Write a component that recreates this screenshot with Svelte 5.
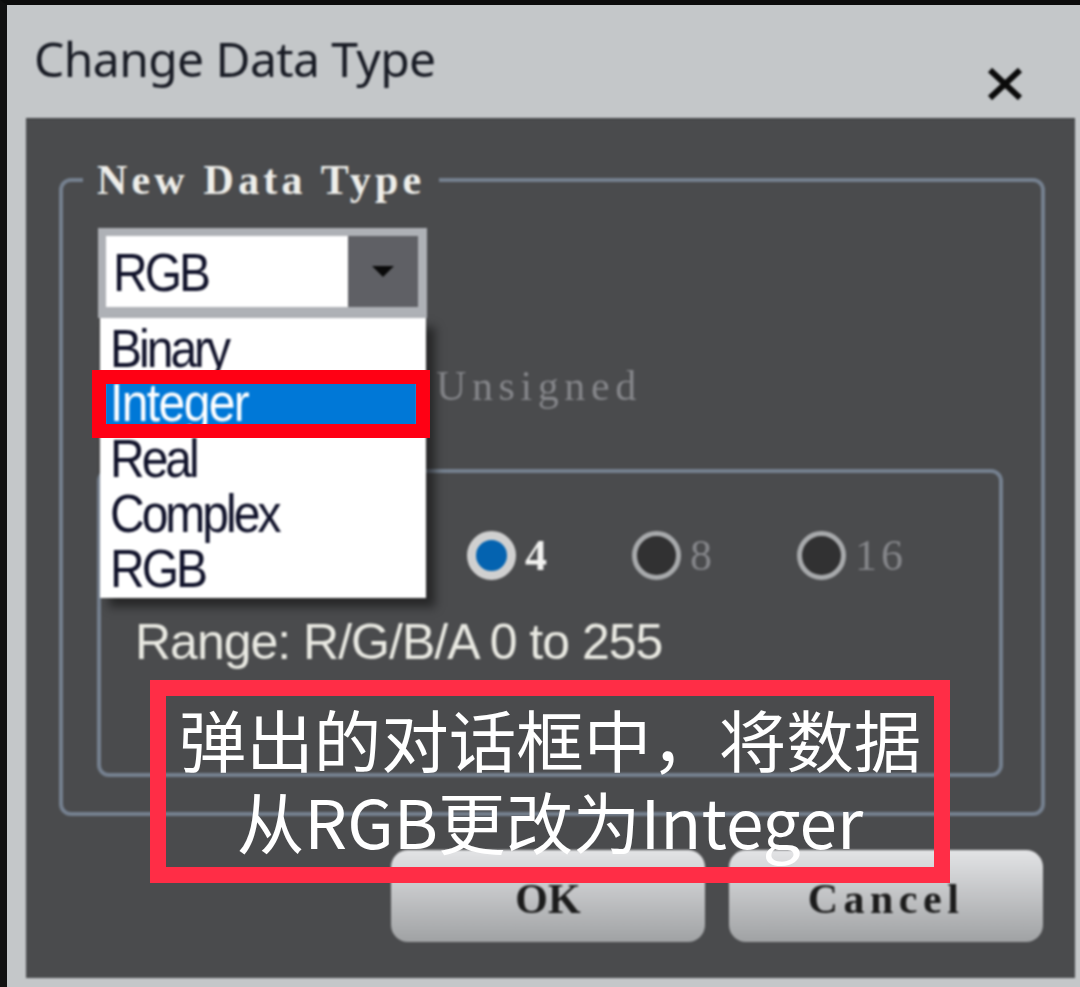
<script>
  const items = ['Binary', 'Integer', 'Real', 'Complex', 'RGB'];
  const radios = [
    { label: '4', on: true },
    { label: '8', on: false },
    { label: '16', on: false }
  ];
</script>

<div class="shot">
  <div class="dialog">
    <div class="titlebar">
      <span class="title">Change Data Type</span>
      <svg class="close" width="36" height="32" viewBox="0 0 36 32">
        <path d="M3 2 L33 30 M33 2 L3 30" stroke="#0a0a0a" stroke-width="6" fill="none" />
      </svg>
    </div>

    <div class="panel">
      <div class="frame outer">
        <span class="legend">New Data Type</span>

        <div class="combo">
          <span class="combo-value">RGB</span>
          <span class="combo-btn"><i class="arrow"></i></span>
        </div>

        <div class="unsigned">Unsigned</div>

        <div class="frame inner">
          <div class="radios">
            {#each radios as r}
              <div class="radio" class:on={r.on}>
                <span class="dot"></span>
                <span class="radio-label">{r.label}</span>
              </div>
            {/each}
          </div>
          <div class="range">Range: R/G/B/A 0 to 255</div>
        </div>

        <ul class="list">
          {#each items as item}
            <li class:sel={item === 'Integer'}><span>{item}</span></li>
          {/each}
        </ul>
      </div>

      <div class="buttons">
        <button class="ok">OK</button>
        <button class="cancel">Cancel</button>
      </div>
    </div>
  </div>

  <div class="mark-integer"></div>

  <div class="note">
    <div>弹出的对话框中，将数据</div>
    <div>从RGB更改为Integer</div>
  </div>
</div>

<style>
  :global(body) {
    margin: 0;
    background: #c3c6c8;
  }

  .shot {
    position: relative;
    box-sizing: border-box;
    width: 1080px;
    height: 987px;
    overflow: hidden;
    background: #c4c7c9;
    border-top: 5px solid #0c0c0c;
    border-left: 7px solid #111;
  }

  .dialog {
    height: 982px;
    filter: blur(0.9px);
  }

  .titlebar {
    box-sizing: border-box;
    display: flex;
    justify-content: space-between;
    height: 113px;
    padding: 24px 57px 0 27px;
  }

  .title {
    font-family: "Noto Sans", "Liberation Sans", sans-serif;
    font-size: 48px;
    line-height: 60px;
    letter-spacing: -0.6px;
    color: #181b24;
  }

  .close {
    margin-top: 39px;
  }

  .panel {
    box-sizing: border-box;
    width: 1049px;
    height: 860px;
    margin-left: 19px;
    padding: 58px 0 0 33px;
    background: #4a4b4d;
    border-top: 2px solid #454648;
  }

  .frame {
    box-sizing: border-box;
    border: 4px solid #75808f;
    border-radius: 12px;
  }

  .outer {
    position: relative;
    width: 986px;
    height: 638px;
    padding: 46px 0 0 35px;
  }

  .legend {
    position: absolute;
    left: 20px;
    top: -25px;
    padding: 0 14px;
    background: #4a4b4d;
    font-family: "Liberation Serif", serif;
    font-size: 42px;
    font-weight: 700;
    line-height: 46px;
    letter-spacing: 4.2px;
    color: #eeeeea;
  }

  .combo {
    box-sizing: border-box;
    display: flex;
    justify-content: space-between;
    width: 329px;
    height: 90px;
    padding: 0 9px 0 0;
    background: #fff;
    border: 8px solid #aeb1b6;
    border-right-width: 0;
    border-bottom-width: 11px;
    box-shadow: inset -9px 0 0 #aeb1b6;
  }

  .combo-value {
    display: inline-block;
    height: 71px;
    padding-left: 7px;
    font-family: "Liberation Sans", sans-serif;
    font-size: 48px;
    line-height: 74px;
    letter-spacing: -3px;
    color: #10122a;
    transform: scaleY(1.12);
  }

  .combo-btn {
    display: flex;
    align-items: center;
    justify-content: center;
    width: 70px;
    background: #5f6065;
  }

  .arrow {
    width: 0;
    height: 0;
    border-left: 11px solid transparent;
    border-right: 11px solid transparent;
    border-top: 11px solid #0a0a0a;
  }

  .unsigned {
    margin: 42px 0 0 338px;
    font-family: "Liberation Serif", serif;
    font-size: 42px;
    line-height: 52px;
    letter-spacing: 5.6px;
    color: #85868a;
  }

  .inner {
    width: 906px;
    height: 308px;
    margin: 57px 0 0 -1px;
    padding: 55px 0 0 0;
  }

  .radios {
    display: flex;
    margin-left: 366px;
  }

  .radio {
    display: flex;
    align-items: center;
    gap: 9px;
    width: 165px;
    height: 54px;
  }

  .dot {
    box-sizing: border-box;
    flex: none;
    width: 49px;
    height: 49px;
    border: 5px solid #a8aaac;
    border-radius: 50%;
    background: #313132;
  }

  .radio.on .dot {
    border: 9px solid #d0d0d0;
    background: #0463b0;
  }

  .radio-label {
    font-family: "Liberation Serif", serif;
    font-size: 44px;
    letter-spacing: 4px;
    color: #85868a;
  }

  .radio.on .radio-label {
    font-weight: 700;
    color: #f2f2f0;
  }

  .range {
    margin: 33px 0 0 34px;
    font-family: "Liberation Sans", sans-serif;
    font-size: 50px;
    line-height: 54px;
    letter-spacing: -1px;
    color: #e9e9e2;
  }

  .list {
    position: absolute;
    left: 37px;
    top: 136px;
    box-sizing: border-box;
    width: 326px;
    height: 280px;
    margin: 0;
    padding: 4px 0 0 0;
    list-style: none;
    background: #fff;
    box-shadow: 9px 9px 9px rgba(15, 15, 15, 0.6);
    font-family: "Liberation Sans", sans-serif;
    font-size: 48px;
    letter-spacing: -3px;
    color: #10122a;
  }

  .list li {
    height: 55px;
    padding-left: 10px;
    line-height: 54px;
  }

  .list li span {
    display: inline-block;
    transform: scaleY(1.12);
  }

  .list li.sel {
    height: 44px;
    margin: 5px 9px 6px 5px;
    padding-left: 5px;
    line-height: 42px;
    letter-spacing: -1.6px;
    overflow: hidden;
    background: #0078d7;
    color: #fff;
  }

  .buttons {
    display: flex;
    justify-content: flex-end;
    gap: 24px;
    width: 984px;
    margin-top: 34px;
  }

  .buttons button {
    box-sizing: border-box;
    width: 314px;
    height: 92px;
    padding: 6px 0 0 0;
    border: 0;
    border-radius: 17px;
    background: linear-gradient(#e3e4e6, #a0a2a4);
    font-family: "Liberation Serif", serif;
    font-size: 42px;
    font-weight: 700;
    color: #1c1c1c;
  }

  .cancel {
    letter-spacing: 5.5px;
  }

  /* annotations drawn on top of the screenshot */
  .mark-integer {
    position: absolute;
    left: 85px;
    top: 365px;
    box-sizing: border-box;
    width: 338px;
    height: 68px;
    border: 14px solid #ff0014;
  }

  .note {
    position: absolute;
    left: 143px;
    top: 675px;
    box-sizing: border-box;
    width: 800px;
    height: 203px;
    padding-top: 1px;
    border: 16px solid #ff2d46;
    font-family: "Noto Sans CJK SC", "Noto Sans", sans-serif;
    font-size: 67.5px;
    line-height: 82px;
    text-align: center;
    color: #fff;
  }
</style>
